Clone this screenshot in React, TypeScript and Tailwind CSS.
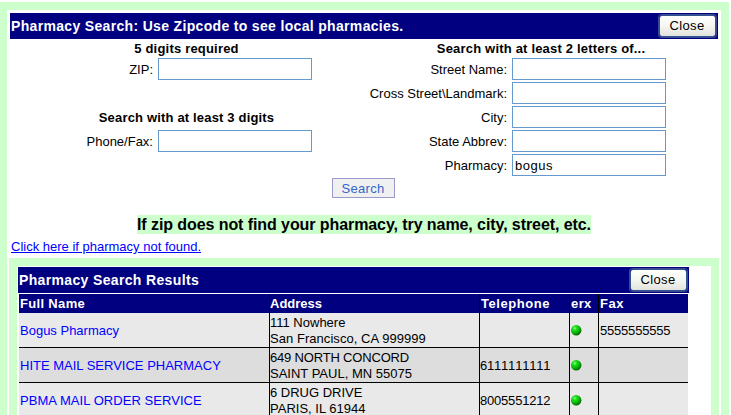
import type { ReactNode } from "react";

function CloseButton() {
  return (
    <button className="flex h-[22px] w-[57px] items-center justify-center rounded-[3px] border border-[#31548c] bg-gradient-to-b from-white via-[#f6f6f1] to-[#e2e2de] pr-px text-[13px] leading-4 tracking-[0.35px] text-black shadow-[0_0_0_1px_#3a4a98]">
      Close
    </button>
  );
}

function Field({ label, labelWidth, value = "" }: { label: string; labelWidth: string; value?: string }) {
  return (
    <label className="flex h-6 items-center">
      <span className={`${labelWidth} mr-[5px] shrink-0 pt-[2px] text-right leading-6 whitespace-nowrap`}>{label}</span>
      <input
        defaultValue={value}
        className="h-[22px] w-[154px] border border-[#6699cc] bg-white px-[2px] pt-px text-[13px] tracking-[0.5px] text-black outline-none"
      />
    </label>
  );
}

function Dot() {
  return (
    <svg width="11" height="11" viewBox="0 0 11 11">
      <defs>
        <radialGradient id="led" cx="0.36" cy="0.3" r="0.75">
          <stop offset="0" stopColor="#8cff84" />
          <stop offset="0.25" stopColor="#1ee01e" />
          <stop offset="0.65" stopColor="#06ac06" />
          <stop offset="1" stopColor="#005800" />
        </radialGradient>
      </defs>
      <circle cx="5.2" cy="5.3" r="5.2" fill="url(#led)" />
    </svg>
  );
}

const columns = "grid grid-cols-[250px_209px_89px_28px_89px] gap-px";

function Cell({ className = "", children }: { className?: string; children?: ReactNode }) {
  return <div className={`flex items-center whitespace-nowrap ${className}`}>{children}</div>;
}

const rows = [
  { name: "Bogus Pharmacy", l1: "111 Nowhere", l2: "San Francisco, CA 999999", phone: "", fax: "5555555555", bg: "bg-[#e9e9e9]", t: "", t1: "", t2: "tracking-[0.05px]" },
  { name: "HITE MAIL SERVICE PHARMACY", l1: "649 NORTH CONCORD", l2: "SAINT PAUL, MN 55075", phone: "6111111111", fax: "", bg: "bg-[#dddddd]", t: "", t1: "tracking-[-0.18px]", t2: "" },
  { name: "PBMA MAIL ORDER SERVICE", l1: "6 DRUG DRIVE", l2: "PARIS, IL 61944", phone: "8005551212", fax: "", bg: "bg-[#e9e9e9]", t: "tracking-[0.05px]", t1: "", t2: "" },
];

export default function App() {
  return (
    <div className="h-[415px] w-[731px] overflow-hidden bg-white pt-[2px] font-['Liberation_Sans',Arial,sans-serif] text-[13px] text-black">
      <div className="h-[413px] w-[729px] bg-[#ccffcc] pt-2 pr-2 pl-[7px]">
        <div className="h-[405px] bg-white pt-[3px] pr-[2px] pl-[2px]">
          <header className="ml-px flex h-[26px] w-[708px] items-center justify-between bg-[#000080] pr-[2px] pl-px">
            <h1 className="text-[14px] font-bold tracking-[0.33px] whitespace-nowrap text-white">
              Pharmacy Search: Use Zipcode to see local pharmacies.
            </h1>
            <CloseButton />
          </header>

          <form className="flex h-[138px]">
            <div className="w-[355px]">
              <h2 className="h-[18px] text-center leading-[19px] font-bold tracking-[0.2px]">5 digits required</h2>
              <Field label="ZIP:" labelWidth="w-[144px]" />
              <div className="h-6" />
              <h2 className="h-6 pt-px text-center leading-6 font-bold tracking-[0.17px]">Search with at least 3 digits</h2>
              <Field label="Phone/Fax:" labelWidth="w-[144px]" />
            </div>
            <div className="w-[354px]">
              <h2 className="h-[18px] text-center leading-[19px] font-bold tracking-[0.19px]">
                Search with at least 2 letters of...
              </h2>
              <Field label="Street Name:" labelWidth="w-[143px]" />
              <Field label={"Cross Street\\Landmark:"} labelWidth="w-[143px]" />
              <Field label="City:" labelWidth="w-[143px]" />
              <Field label="State Abbrev:" labelWidth="w-[143px]" />
              <Field label="Pharmacy:" labelWidth="w-[143px]" value="bogus" />
            </div>
          </form>

          <div className="flex h-[21px] justify-center pt-px pr-[2px]">
            <button className="h-5 w-[63px] border border-[#9999cc] bg-[#f0f0f0] pt-px text-[13px] leading-[18px] tracking-[0.3px] text-[#3366cc]">
              Search
            </button>
          </div>

          <div className="mt-[17px] flex justify-center">
            <p className="h-[19px] w-[454px] bg-[#ccffcc] text-[16px] leading-[19px] font-bold tracking-[-0.08px] whitespace-nowrap">
              If zip does not find your pharmacy, try name, city, street, etc.
            </p>
          </div>

          <a href="#" className="mt-[5px] ml-[2px] block h-[19px] w-fit leading-4 whitespace-nowrap text-[#0000ff] underline">
            Click here if pharmacy not found.
          </a>

          <section className="h-[157px] w-[710px] bg-[#ccffcc] px-2 pt-2">
            <div className="h-[149px] bg-white pt-px pl-px">
              <header className="flex h-[26px] w-[671px] items-center justify-between bg-[#000080] pr-[2px] pl-px">
                <h1 className="text-[14px] font-bold tracking-[0.35px] whitespace-nowrap text-white">Pharmacy Search Results</h1>
                <CloseButton />
              </header>
              <div className="mt-px ml-px flex w-[669px] flex-col gap-px bg-black">
                <div className={`${columns} h-[18px] leading-[18px] font-bold text-white`}>
                  <Cell className="bg-[#000080] pt-px pl-px tracking-[0.33px]">Full Name</Cell>
                  <Cell className="bg-[#000080] pt-px">Address</Cell>
                  <Cell className="bg-[#000080] pt-px pl-px tracking-[0.55px]">Telephone</Cell>
                  <Cell className="bg-[#000080] pt-px pl-px tracking-[0.4px]">erx</Cell>
                  <Cell className="bg-[#000080] pt-px pl-px tracking-[0.5px]">Fax</Cell>
                </div>
                {rows.map((r) => (
                  <div key={r.name} className={`${columns} h-[34px]`}>
                    <Cell className={`${r.bg} ${r.t} pt-[2px] pl-px text-[#0000ff]`}>{r.name}</Cell>
                    <Cell className={`${r.bg} pt-[2px]`}>
                      <div className="leading-4">
                        <div className={r.t1}>{r.l1}</div>
                        <div className={r.t2}>{r.l2}</div>
                      </div>
                    </Cell>
                    <Cell className={`${r.bg} pt-[2px] tracking-[-0.2px] [font-kerning:none]`}>{r.phone}</Cell>
                    <Cell className={`${r.bg} pl-px`}>
                      <Dot />
                    </Cell>
                    <Cell className={`${r.bg} pt-[2px] pl-px tracking-[-0.2px] [font-kerning:none]`}>{r.fax}</Cell>
                  </div>
                ))}
              </div>
            </div>
          </section>
        </div>
      </div>
    </div>
  );
}
